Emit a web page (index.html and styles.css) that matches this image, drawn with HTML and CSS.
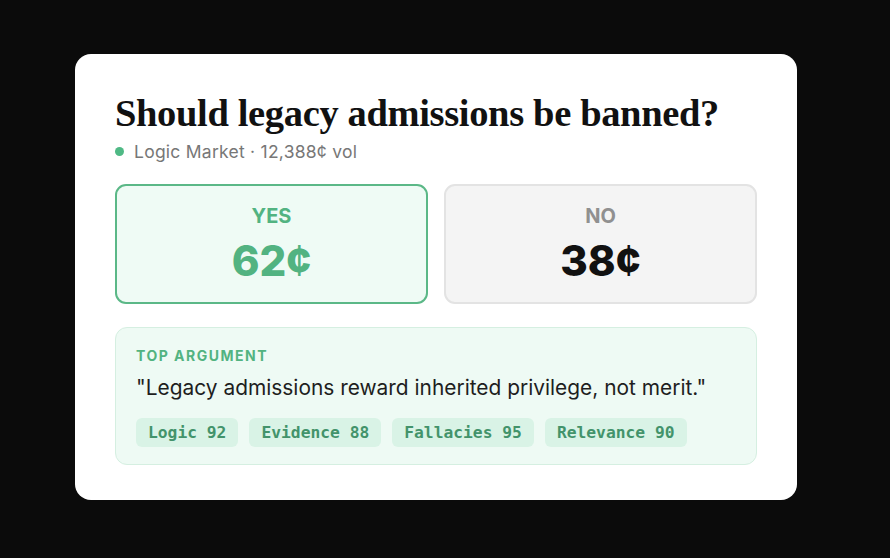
FILE: index.html
```html
<!DOCTYPE html>
<html>
<head>
<meta charset="utf-8">
<link rel="stylesheet" href="styles.css">
</head>
<body>
<div class="card">
  <h1 class="title">Should legacy admissions be banned?</h1>
  <div class="meta"><span class="dot"></span><span>Logic Market · 12,388¢ vol</span></div>
  <div class="options">
    <div class="opt yes">
      <div class="opt-label">YES</div>
      <div class="opt-price">62¢</div>
    </div>
    <div class="opt no">
      <div class="opt-label">NO</div>
      <div class="opt-price">38¢</div>
    </div>
  </div>
  <div class="arg">
    <div class="arg-head">TOP ARGUMENT</div>
    <div class="arg-quote">"Legacy admissions reward inherited privilege, not merit."</div>
    <div class="chips">
      <span class="chip">Logic 92</span>
      <span class="chip">Evidence 88</span>
      <span class="chip">Fallacies 95</span>
      <span class="chip">Relevance 90</span>
    </div>
  </div>
</div>
</body>
</html>
```

FILE: styles.css
```css
* { box-sizing: border-box; }
html, body { margin: 0; height: 100%; }
body {
  background: #0b0b0b;
  padding: 54px 0 0 75px;
  font-family: "Inter", "Liberation Sans", sans-serif;
}
.card {
  width: 722px;
  height: 446px;
  background: #ffffff;
  border-radius: 16px;
  padding: 36px 40px 0 40px;
}
.title {
  margin: 0;
  font-family: "Liberation Serif", "DejaVu Serif", serif;
  font-weight: 700;
  font-size: 38.5px;
  line-height: 46px;
  color: #111111;
  letter-spacing: -0.35px;
}
.meta {
  display: flex;
  align-items: center;
  gap: 10px;
  margin-top: 4px;
  font-size: 17.5px;
  letter-spacing: 0.25px;
  color: #777777;
  height: 22px;
}
.dot {
  width: 9px;
  height: 9px;
  border-radius: 50%;
  background: #4fb985;
}
.options {
  display: grid;
  grid-template-columns: 1fr 1fr;
  gap: 16px;
  margin-top: 22px;
}
.opt {
  height: 120px;
  border-radius: 11px;
  display: flex;
  flex-direction: column;
  align-items: center;
  padding-top: 18px;
}
.yes {
  background: #effbf5;
  border: 2px solid #5bb887;
}
.no {
  background: #f4f4f4;
  border: 2px solid #e3e3e3;
}
.opt-label {
  font-size: 20px;
  font-weight: 700;
  line-height: 24px;
}
.yes .opt-label { color: #52b381; }
.no .opt-label { color: #909090; }
.opt-price {
  font-size: 42px;
  font-weight: 800;
  line-height: 50px;
  margin-top: 8px;
}
.yes .opt-price { color: #52b381; }
.no .opt-price { color: #111111; }
.arg {
  margin-top: 23px;
  height: 138px;
  background: #eefaf4;
  border: 1px solid #d5efe1;
  border-radius: 12px;
  padding: 19px 20px 0 20px;
}
.arg-head {
  font-size: 14px;
  font-weight: 700;
  letter-spacing: 1.5px;
  color: #52b381;
  line-height: 18px;
}
.arg-quote {
  margin-top: 9px;
  font-size: 20.9px;
  line-height: 28px;
  color: #1e1e1e;
}
.chips {
  display: flex;
  gap: 11px;
  margin-top: 16px;
}
.chip {
  background: #d9f3e6;
  border-radius: 6px;
  padding: 0 12px;
  height: 29px;
  line-height: 29px;
  font-family: "DejaVu Sans Mono", "Liberation Mono", monospace;
  font-weight: 700;
  font-size: 16.3px;
  color: #43936b;
}
```
